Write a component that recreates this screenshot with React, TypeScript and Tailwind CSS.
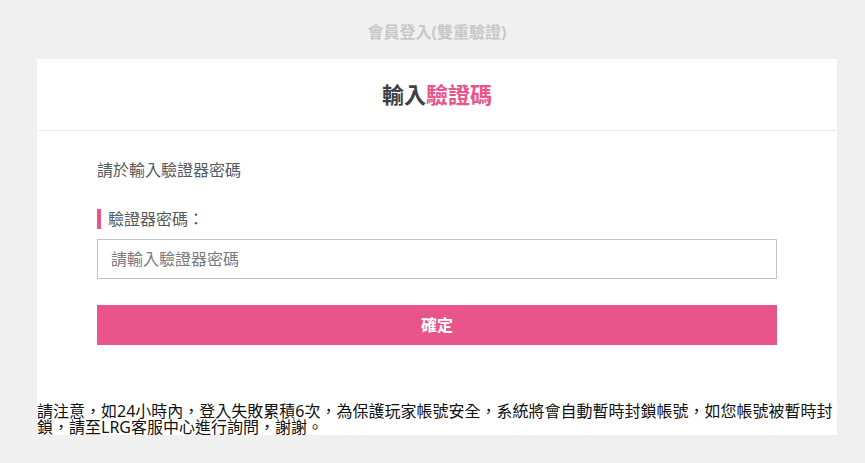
export default function App() {
  return (
    <div
      className="min-h-screen bg-[#f0f0f0]"
      style={{ fontFamily: '"Noto Sans", "Noto Sans CJK TC", sans-serif' }}
    >
      <div className="ml-[9px] w-[856px]">
        <h1 className="flex h-[59px] items-center justify-center pt-[5px] text-[16px] font-bold text-[#c8c8c8]">
          會員登入(雙重驗證)
        </h1>

        <div className="mx-auto w-[800px] bg-white">
          <div className="flex h-[72px] items-center justify-center border-b border-[#ebebeb] text-[22px] font-bold text-[#3d4148]">
            輸入<span className="text-[#e9548a]">驗證碼</span>
          </div>

          <div className="px-[60px] pt-[27px] pb-[58px]">
            <p className="text-[16px] leading-[24px] text-[#555a60]">請於輸入驗證器密碼</p>

            <div className="mt-[25px] flex items-center gap-[7px]">
              <span className="h-[20px] w-[4px] bg-[#e9548a]" />
              <span className="text-[16px] leading-[24px] text-[#555a60]">驗證器密碼：</span>
            </div>

            <input
              type="password"
              placeholder="請輸入驗證器密碼"
              className="mt-[8px] block h-[40px] w-full border border-[#c4c4c4] px-[13px] text-[16px] outline-none placeholder:text-[#777b80]"
            />

            <button className="mt-[26px] flex h-[40px] w-full items-center justify-center bg-[#e9548a] text-[16px] font-bold text-white">
              確定
            </button>
          </div>

          <p className="text-[16px] leading-[16px] text-[#111]">
            請注意，如24小時內，登入失敗累積6次，為保護玩家帳號安全，系統將會自動暫時封鎖帳號，如您帳號被暫時封鎖，請至LRG客服中心進行詢問，謝謝。
          </p>
        </div>
      </div>
    </div>
  );
}
